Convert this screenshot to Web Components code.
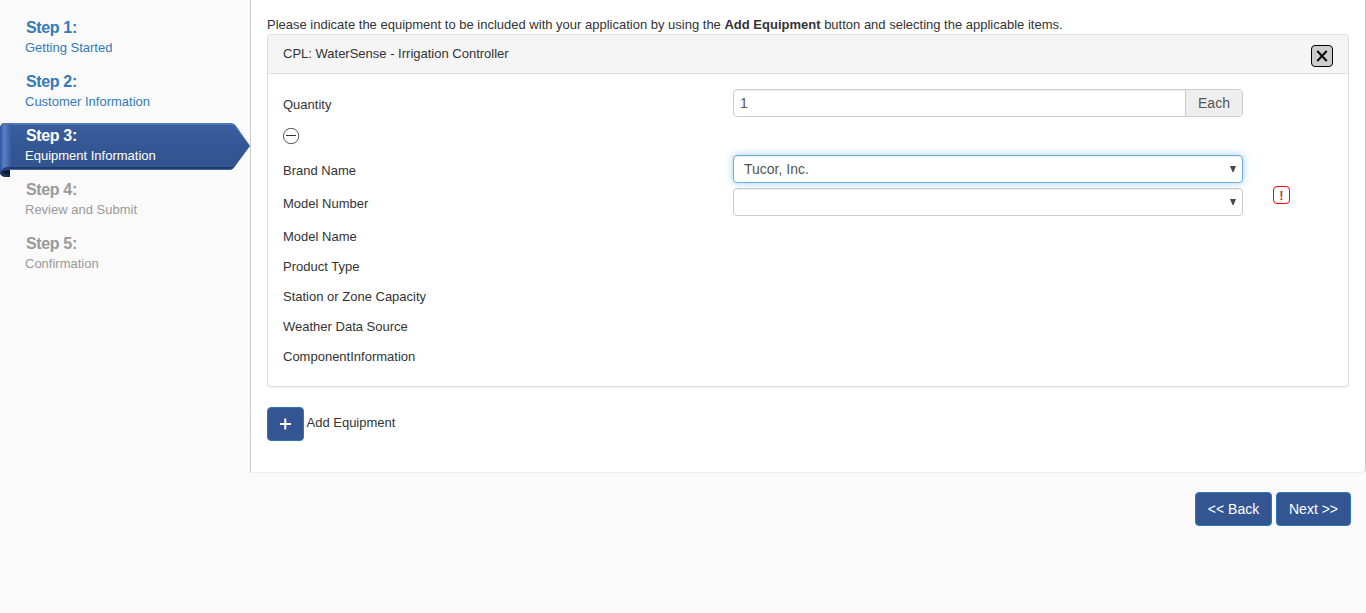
<!DOCTYPE html>
<html lang="en"><head><meta charset="utf-8"><title>Equipment Information</title>
<style>
html{background:#fafafa}
body{margin:0;font:13px/20px "Liberation Sans",Arial,sans-serif;color:#333;background:#fafafa}
</style></head><body>
<equipment-page></equipment-page>
<script>
const define=(name,html,setup)=>customElements.define(name,class extends HTMLElement{
  constructor(){super();this.attachShadow({mode:'open'}).innerHTML=html;}
  connectedCallback(){if(setup)setup(this,this.shadowRoot);}
});

define('wizard-step',`<style>
:host{display:block;position:relative;height:54px;padding-left:25px;box-sizing:border-box;color:#337ab7;white-space:nowrap}
:host([state=todo]){color:#999}
:host([state=current]){color:#fff}
svg{display:none;position:absolute;left:0;top:-3px}
:host([state=current]) svg{display:block}
b,span{display:block;position:relative}
b{font-size:16px;padding-left:1px;letter-spacing:-.35px}
</style>
<svg width="250" height="54" viewBox="0 0 250 54">
<defs><linearGradient id="body" x1="0" x2="0" y1="0" y2="1"><stop offset="0" stop-color="#3a5f9f"/><stop offset=".5" stop-color="#335693"/><stop offset="1" stop-color="#31538f"/></linearGradient>
<linearGradient id="curl" x1="0" x2="1" y1="0" y2="0"><stop offset="0" stop-color="#31549a"/><stop offset=".3" stop-color="#5880c8"/><stop offset=".65" stop-color="#4369b2"/><stop offset="1" stop-color="#335693" stop-opacity="0"/></linearGradient></defs>
<path d="M0 45H10V54H7Q1 54 0 50Z" fill="#0d1b33"/>
<path d="M0 48Q4 51 10 52V54H7Q1 54 0 50Z" fill="#1c325a"/>
<path d="M4 0H230Q234 0 236 3L250 23L236 42Q233 47 230 47H8Q2 47 0 51V4Q1 0 4 0Z" fill="url(#body)"/>
<path d="M8 44H234L230 46H8Q2 46 0 51V48Q3 44 8 44Z" fill="#213c6c"/>
<path d="M10 46.5H230" stroke="#4269aa"/>
<path d="M4 0H231L235 2H2Z" fill="#5079c0"/>
<path d="M231 1Q235 3 249 22" stroke="#4b73bc" fill="none"/>
<path d="M3 1H13V44H8Q3 44 0 49V4Z" fill="url(#curl)"/>
</svg><b></b><span><slot></slot></span>`,(h,r)=>{r.querySelector('b').textContent='Step '+h.getAttribute('number')+':'});

define('step-nav',`<style>:host{display:block;width:250px;padding-top:18px;flex:none;box-sizing:border-box}</style>
<wizard-step number="1">Getting Started</wizard-step>
<wizard-step number="2">Customer Information</wizard-step>
<wizard-step number="3" state="current">Equipment Information</wizard-step>
<wizard-step number="4" state="todo">Review and Submit</wizard-step>
<wizard-step number="5" state="todo">Confirmation</wizard-step>`);

define('action-button',`<style>:host{display:inline-block}
button{display:block;font:14px/20px "Liberation Sans",Arial,sans-serif;color:#fff;background:#335693;border:1px solid #2e77b8;border-radius:4px;height:34px;padding:0;width:var(--w);cursor:pointer}
</style><button><slot></slot></button>`);

define('field-row',`<style>
:host{display:grid;grid-template-columns:450px 510px auto;height:30px;align-items:start}
:host([control]){height:33px}
.label{padding-top:6px;white-space:nowrap}
</style><div class="label"><slot name="label"></slot></div><slot></slot>`);

define('quantity-input',`<style>
:host{display:flex;height:28px;box-sizing:border-box;border:1px solid #ccc;border-radius:4px;color:#555;font-size:14px;line-height:26px;background:#fff;overflow:hidden}
.value{flex:1;padding-left:6px;box-shadow:inset 0 1px 1px rgba(0,0,0,.075)}
.unit{width:56px;background:#eee;border-left:1px solid #ccc;text-align:center}
</style><div class="value"><slot></slot></div><div class="unit">Each</div>`);

define('select-box',`<style>
:host{display:flex;align-items:center;justify-content:space-between;height:28px;box-sizing:border-box;border:1px solid #ccc;border-radius:4px;color:#555;font-size:14px;padding:0 6px 0 10px;background:#fff;box-shadow:inset 0 1px 1px rgba(0,0,0,.075)}
:host([focused]){border-color:#66afe9;box-shadow:inset 0 1px 1px rgba(0,0,0,.075),0 0 8px rgba(102,175,233,.6)}
svg{display:block}
</style><span><slot></slot></span><svg width="6" height="6"><path d="M0 0H6L3.5 6H2.5Z" fill="#484848"/></svg>`);

define('error-mark',`<style>
:host{display:block;width:17px;height:18px;box-sizing:border-box;border:1px solid #f00;border-radius:4px;margin:-2px 0 0 30px;color:#a9442f;font:bold 13px/17px "Liberation Sans",Arial,sans-serif;text-align:center}
</style>!`);

define('collapse-toggle',`<style>:host{display:block;height:33px;padding-top:6px;box-sizing:border-box}svg{display:block}</style>
<svg width="17" height="17"><circle cx="8.1" cy="8" r="7.7" fill="none" stroke="#444" stroke-width=".9"/><path d="M3 7.5H13" stroke="#333"/></svg>`);

define('equipment-panel',`<style>
:host{display:block;height:353px;box-sizing:border-box;border:1px solid #ddd;border-radius:4px;background:#fff;box-shadow:0 1px 1px rgba(0,0,0,.05)}
header{height:39px;box-sizing:border-box;background:#f5f5f5;border-bottom:1px solid #ddd;border-radius:3px 3px 0 0;display:flex;justify-content:space-between;padding:9px 15px 0}
button{width:22px;height:22px;padding:0;border:1px solid #000;border-radius:4px;background:#ccc;margin-top:1px;display:flex;align-items:center;justify-content:center}
main{padding:15px}
</style>
<header><span>CPL: WaterSense - Irrigation Controller</span><button aria-label="Remove"><svg width="12" height="12"><path d="M1.3 1L10.7 11M10.7 1L1.3 11" stroke="#000" stroke-width="2"/></svg></button></header>
<main>
<field-row control><span slot="label">Quantity</span><quantity-input>1</quantity-input></field-row>
<collapse-toggle></collapse-toggle>
<field-row control><span slot="label">Brand Name</span><select-box focused>Tucor, Inc.</select-box></field-row>
<field-row control><span slot="label">Model Number</span><select-box></select-box><error-mark></error-mark></field-row>
<field-row><span slot="label">Model Name</span></field-row>
<field-row><span slot="label">Product Type</span></field-row>
<field-row><span slot="label">Station or Zone Capacity</span></field-row>
<field-row><span slot="label">Weather Data Source</span></field-row>
<field-row><span slot="label">ComponentInformation</span></field-row>
</main>`);

define('equipment-page',`<style>
:host{display:block;width:1366px;height:613px;overflow:hidden}
.top{display:flex;height:473px}
.content{flex:1;box-sizing:border-box;background:#fff;border:1px solid #ccc;border-top:0;border-bottom-color:#eee;border-bottom-right-radius:4px;padding:15px 16px 0}
.intro{height:19px}
.add{display:flex;margin-top:20px;gap:2.5px}
.add span{padding-top:6px}
.add svg{display:block;margin:0 auto}
footer{display:flex;justify-content:flex-end;gap:4px;padding:19px 15px 0 0}
</style>
<div class="top"><step-nav></step-nav><div class="content">
<div class="intro">Please indicate the equipment to be included with your application by using the <b>Add Equipment</b> button and selecting the applicable items.</div>
<equipment-panel></equipment-panel>
<div class="add"><action-button style="--w:37px"><svg width="13" height="12"><path d="M1 6H12M6.3 .5V11.5" stroke="#fff" stroke-width="2"/></svg></action-button><span>Add Equipment</span></div>
</div></div>
<footer><action-button style="--w:77px">&lt;&lt; Back</action-button><action-button style="--w:75px">Next &gt;&gt;</action-button></footer>`);
</script></body></html>
